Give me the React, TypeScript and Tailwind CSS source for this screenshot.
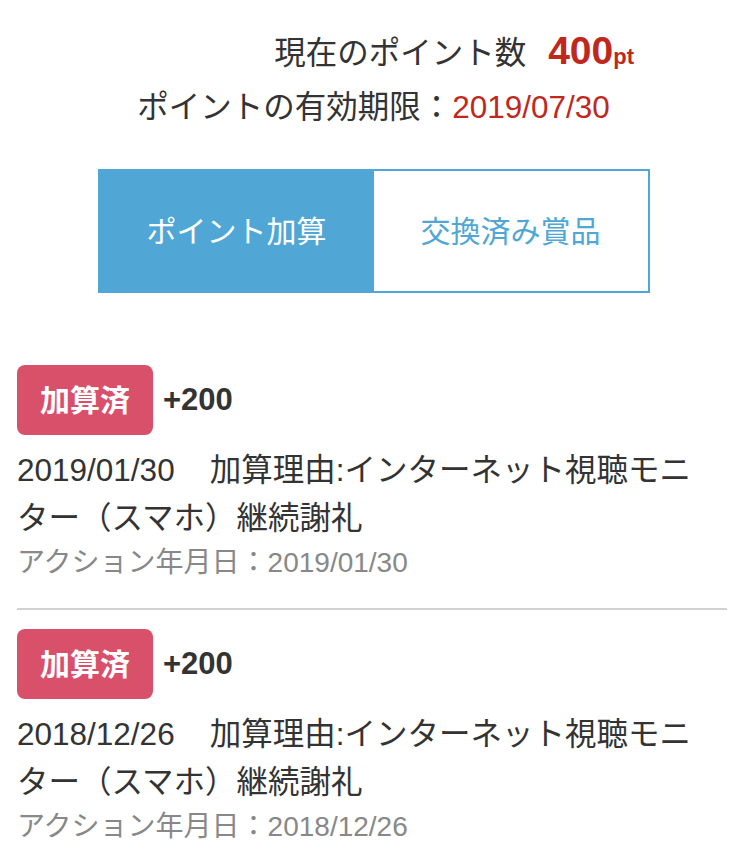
import React from 'react'

const font = { fontFamily: '"Liberation Sans", "Noto Sans CJK JP", sans-serif' }

const history = [
  { date: '2019/01/30', points: '+200', reason: 'インターネット視聴モニター（スマホ）継続謝礼', action: '2019/01/30' },
  { date: '2018/12/26', points: '+200', reason: 'インターネット視聴モニター（スマホ）継続謝礼', action: '2018/12/26' },
]

export default function App() {
  return (
    <div className="min-h-[857px] bg-white text-[#333]" style={font}>
      {/* Summary */}
      <div className="pt-[30px]">
        <div className="flex items-baseline justify-end pr-[113px] h-[46px]">
          <span className="text-[31.5px]">現在のポイント数</span>
          <span className="ml-[22px] text-[39px] font-bold text-[#c0281e] leading-none">400</span>
          <span className="text-[22px] font-bold text-[#c0281e] leading-none">pt</span>
        </div>
        <div className="flex items-baseline justify-center mt-[8px] h-[46px]">
          <span className="text-[31.5px]">ポイントの有効期限：</span>
          <span className="text-[31.5px] text-[#c0281e]">2019/07/30</span>
        </div>
      </div>

      {/* Tabs */}
      <div className="mt-[39px] flex justify-center">
        <div className="flex w-[552px] h-[124px] border-2 border-[#50a7d6]">
          <button className="flex-1 bg-[#50a7d6] text-white text-[30px]">ポイント加算</button>
          <button className="flex-1 bg-white text-[#50a7d6] text-[30px]">交換済み賞品</button>
        </div>
      </div>

      {/* History */}
      <div className="mt-[72px] pl-[17px] pr-[20px]">
        {history.map((h, i) => (
          <div key={i} className={i > 0 ? 'border-t-2 border-[#d2d2d2] pt-[19px]' : ''}>
            <div className="flex items-center gap-[10px]">
              <span className="flex items-center justify-center w-[136px] h-[70px] rounded-[8px] bg-[#d9506b] text-white text-[30px] font-bold">
                加算済
              </span>
              <span className="text-[31px] font-bold">{h.points}</span>
            </div>
            <p className="mt-[11px] max-w-[690px] text-[31.5px] leading-[48px]">
              <span className="mr-[35px]">{h.date}</span>加算理由:{h.reason}
            </p>
            <p className="text-[28px] leading-[42px] text-[#888] pb-[24px]">
              アクション年月日：{h.action}
            </p>
          </div>
        ))}
      </div>
    </div>
  )
}
